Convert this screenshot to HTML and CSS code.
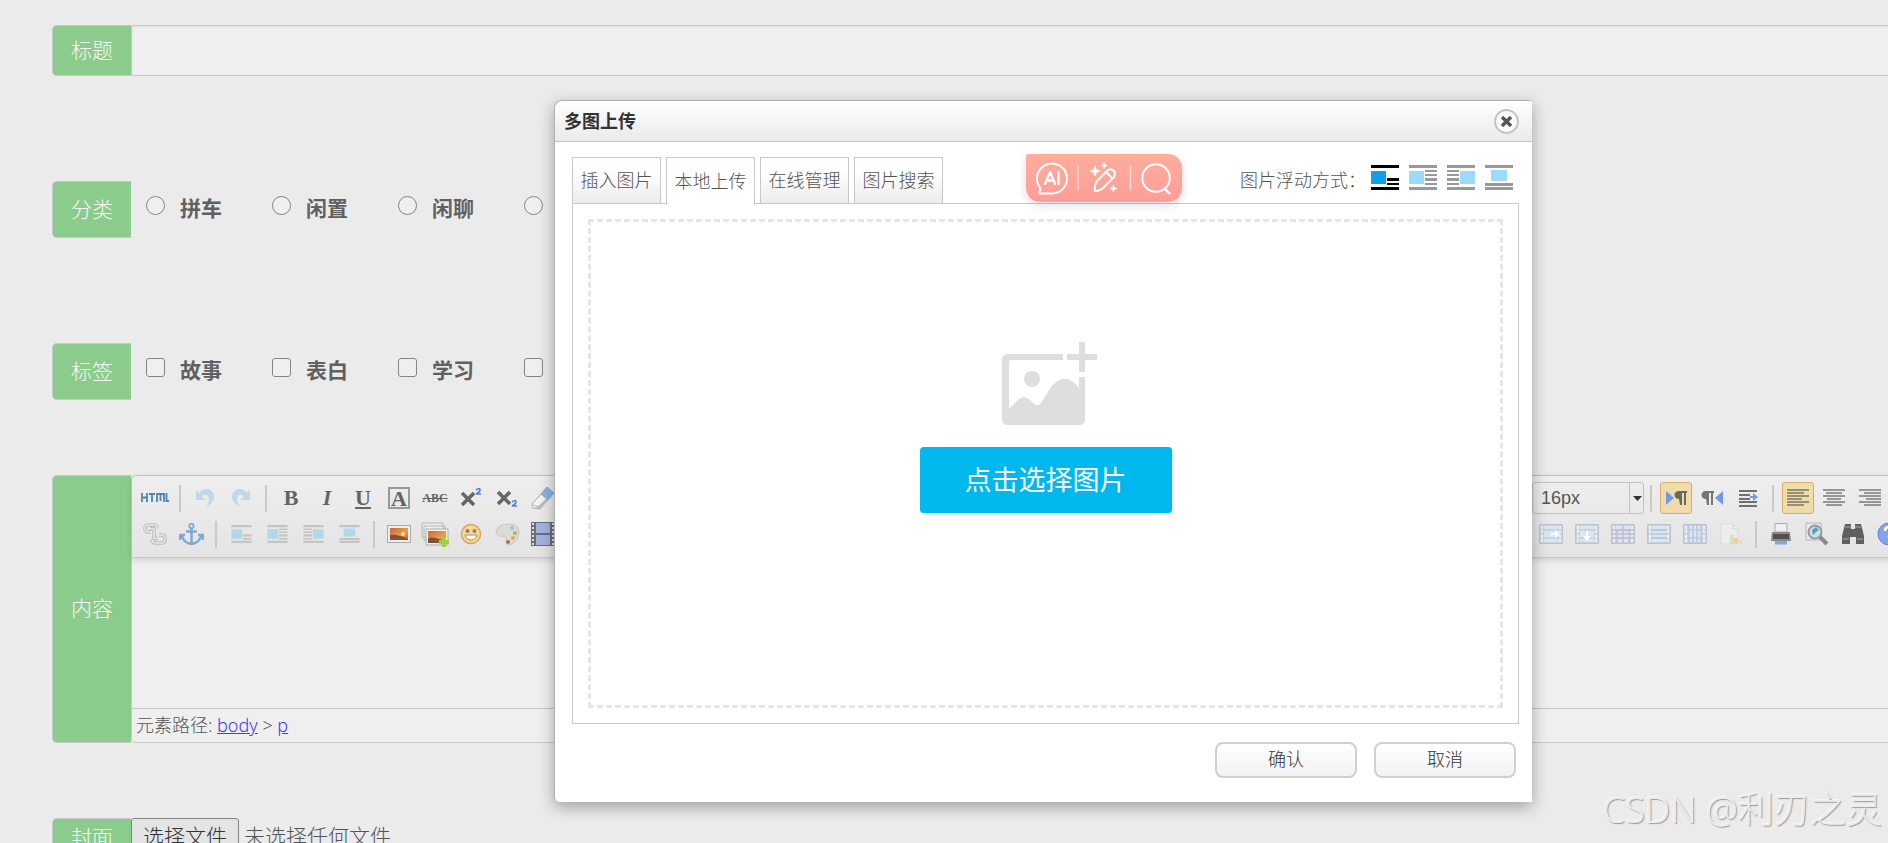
FILE: index.html
```html
<!DOCTYPE html>
<html lang="zh-CN">
<head>
<meta charset="utf-8">
<title>多图上传</title>
<link rel="stylesheet" href="styles.css">
</head>
<body>
<svg class="defs" aria-hidden="true">
  <defs>
    <linearGradient id="sky" x1="0" y1="0" x2="1" y2="1"><stop offset="0" stop-color="#c9673a"/><stop offset=".6" stop-color="#e8a04c"/><stop offset="1" stop-color="#b8643c"/></linearGradient>
    <symbol id="f-none" viewBox="0 0 28 25"><path class="ln" d="M0 0h28v3H0zM16 13h12v3H16zM16 18h12v2H16zM0 22h28v3H0z"/><path class="im" d="M0 6h15v13H0z"/></symbol>
    <symbol id="f-left" viewBox="0 0 28 25"><path class="ln" d="M0 0h28v3H0zM16 5h12v2H16zM16 9h12v2H16zM16 13h12v3H16zM16 18h12v2H16zM0 22h28v3H0z"/><path class="im" d="M0 6h15v13H0z"/></symbol>
    <symbol id="f-right" viewBox="0 0 28 25"><path class="ln" d="M0 0h28v3H0zM0 5h12v2H0zM0 9h12v2H0zM0 13h12v3H0zM0 18h12v2H0zM0 22h28v3H0z"/><path class="im" d="M13 6h15v13H13z"/></symbol>
    <symbol id="f-center" viewBox="0 0 28 25"><path class="ln" d="M0 0h28v3H0zM0 18h28v3H0zM0 22h28v3H0z"/><path class="im" d="M6 5h16v11H6z"/></symbol>
    <symbol id="undo" viewBox="0 0 20 20"><path d="M1 2v10h10L7 9c3-4 7-2 7 2 0 3-1 5-3 8 5-3 8-6 8-10C19 1 9-2 4 5z" fill="#c3d7e8"/></symbol>
    <symbol id="film" viewBox="0 0 24 20"><path d="M.5.500h23v19H.5z" fill="#c8d3de" stroke="#b8c4d2"/><path d="M5 2h14v3H5zM5 7h14v6H5zM5 15h14v3H5z" fill="#dce6f0"/><path d="M2 2h2v3H2zM2 6h2v3H2zM2 11h2v3H2zM2 15h2v3H2zM20 2h2v3h-2zM20 6h2v3h-2zM20 11h2v3h-2zM20 15h2v3h-2z" fill="#edf1f5"/></symbol>
  </defs>
</svg>

<main class="form">
  <div class="group">
    <label class="tag" for="title">标题</label>
    <input class="title-input" id="title" type="text">
  </div>

  <div class="group choices" role="radiogroup" aria-labelledby="cat">
    <span class="tag" id="cat">分类</span>
    <label class="choice"><input type="radio" name="cat"><b>拼车</b></label>
    <label class="choice"><input type="radio" name="cat"><b>闲置</b></label>
    <label class="choice"><input type="radio" name="cat"><b>闲聊</b></label>
    <label class="choice"><input type="radio" name="cat" aria-label="其他"></label>
  </div>

  <div class="group choices" role="group" aria-labelledby="tags">
    <span class="tag" id="tags">标签</span>
    <label class="choice"><input type="checkbox"><b>故事</b></label>
    <label class="choice"><input type="checkbox"><b>表白</b></label>
    <label class="choice"><input type="checkbox"><b>学习</b></label>
    <label class="choice"><input type="checkbox" aria-label="其他"></label>
  </div>

  <div class="group content">
    <span class="tag">内容</span>
    <section class="editor">
      <div class="toolbar">
        <div class="row first">
          <button class="tool"><svg width="28" height="12" viewBox="0 0 28 12"><path d="M1 1v9M6 1v9M1 5.500h5M8 2h6M11 2v8M16 10V2h7v8M19.500 2v7M25.500 1v8h3" fill="none" stroke="#5584b3" stroke-width="1.800"/></svg></button>
          <i class="sep"></i>
          <button class="tool"><svg width="20" height="20"><use href="#undo"/></svg></button>
          <button class="tool flip"><svg width="20" height="20"><use href="#undo"/></svg></button>
          <i class="sep"></i>
          <button class="tool glyph strong">B</button>
          <button class="tool glyph slant">I</button>
          <button class="tool glyph under">U</button>
          <button class="tool glyph"><span class="boxed">A</span></button>
          <button class="tool glyph small-caps">ABC</button>
          <button class="tool"><svg width="22" height="22" viewBox="0 0 22 22"><path d="M2 6l12 12M14 6L2 18" stroke="#666" stroke-width="3.600"/><path d="M16 3q4-3 4 0 0 2-4 4h5" fill="none" stroke="#5b7de0" stroke-width="1.600"/></svg></button>
          <button class="tool"><svg width="22" height="22" viewBox="0 0 22 22"><path d="M2 5l12 12M14 5L2 17" stroke="#666" stroke-width="3.600"/><path d="M16 15q4-3 4 0 0 2-4 4h5" fill="none" stroke="#5b7de0" stroke-width="1.600"/></svg></button>
          <button class="tool"><svg width="24" height="24" viewBox="0 0 24 24"><path d="M16 1l7 6-6 7-7-6z" fill="#86b3ea" stroke="#8ba5c8"/><path d="M10 8l7 6-8 9-7-1-1-4z" fill="#f3f3f3" stroke="#a5a5aa"/><path d="M1 18l7 5 9-9-2-1-8 7z" fill="#b9bbc0"/></svg></button>
          <div class="right-tools">
            <div class="size-box"><select aria-label="字号"><option>16px</option></select><svg width="9" height="5" viewBox="0 0 9 5"><path d="M0 0h9L4.500 5z" fill="#333"/></svg></div>
            <i class="sep"></i>
            <button class="tool"><span class="on"><svg width="22" height="18" viewBox="0 0 22 18"><path d="M1 2l8 7-8 7z" fill="#6f9aea"/><path d="M14 10C8 10 8 2 14 2h8v2h-1v12h-2V4h-2v12h-2z" fill="#6d695e"/></svg></span></button>
            <button class="tool"><svg width="22" height="18" viewBox="0 0 22 18"><path d="M22 2l-8 7 8 7z" fill="#6f9aea"/><path d="M5 10C-1 10-1 2 5 2h8v2h-1v12h-2V4H8v12H6z" fill="#757575"/></svg></button>
            <button class="tool"><svg width="20" height="18" viewBox="0 0 20 18"><path d="M1 2h18M1 6h11M1 10h11M1 13h18M1 17h18" stroke="#707070" stroke-width="2"/><path d="M12 7h3V4l5 4-5 4V9h-3z" fill="#6f9aea"/></svg></button>
            <i class="sep"></i>
            <button class="tool"><span class="on"><svg width="22" height="18" viewBox="0 0 22 18"><path d="M0 1h22M0 4h17M0 7h22M0 10h15M0 13h22M0 16h17" stroke="#7b7668" stroke-width="1.500"/></svg></span></button>
            <button class="tool"><svg width="22" height="18" viewBox="0 0 22 18"><path d="M0 1h22M3 4h16M0 7h22M4 10h14M0 13h22M3 16h16" stroke="#7b7b7b" stroke-width="1.500"/></svg></button>
            <button class="tool"><svg width="22" height="18" viewBox="0 0 22 18"><path d="M0 1h22M5 4h17M0 7h22M7 10h15M0 13h22M5 16h17" stroke="#7b7b7b" stroke-width="1.500"/></svg></button>
          </div>
        </div>
        <div class="row">
          <button class="tool"><svg width="24" height="22" viewBox="0 0 24 22"><path d="M8 9H5q-3 0-3-3.500T5 2h6q3 0 3 3.500M7 5.500h4v10h4M16 12h3q3 0 3 4t-3 4h-6q-4 0-4-4" fill="none" stroke="#bdbdbd" stroke-width="3.600"/><path d="M8 9H5q-3 0-3-3.500T5 2h6q3 0 3 3.500M7 5.500h4v10h4M16 12h3q3 0 3 4t-3 4h-6q-4 0-4-4" fill="none" stroke="#e6e6e6" stroke-width="1.600"/></svg></button>
          <button class="tool"><svg width="25" height="23" viewBox="0 0 25 23"><circle cx="12.500" cy="3" r="2.200" fill="none" stroke="#7ea9d3" stroke-width="1.800"/><path d="M12.500 5v16M7 8.500h11M1 11v6M1 12h5M24 11v6M24 12h-5M3 13q2 7 9.500 8 7.500-1 9.500-8" fill="none" stroke="#7ea9d3" stroke-width="2.500"/></svg></button>
          <i class="sep"></i>
          <button class="tool dim"><svg width="21" height="18"><use href="#f-none"/></svg></button>
          <button class="tool dim"><svg width="21" height="18"><use href="#f-left"/></svg></button>
          <button class="tool dim"><svg width="21" height="18"><use href="#f-right"/></svg></button>
          <button class="tool dim"><svg width="21" height="18"><use href="#f-center"/></svg></button>
          <i class="sep"></i>
          <button class="tool"><svg width="24" height="18" viewBox="0 0 24 18"><path d="M.5.500h23v17H.5z" fill="#eee" stroke="#aaa"/><path d="M3 3h18v12H3z" fill="url(#sky)"/><path d="M3 10q7-1 18 4v1H3z" fill="#84503a"/><circle cx="16" cy="9" r="2" fill="#ffe08a"/></svg></button>
          <button class="tool"><svg width="28" height="25" viewBox="0 0 28 25"><path d="M1 1h21v14H1zM3 4h21v14H3z" fill="#eee" stroke="#b5b5b5"/><path d="M5 7h22v16H5z" fill="#f2f2f2" stroke="#aaa"/><path d="M7 9h18v12H7z" fill="url(#sky)"/><path d="M7 16q6-2 16 3v2H7z" fill="#84503a"/><path d="M21 15h4v3h3v4h-3v3h-4v-3h-3v-4h3z" fill="#9bd344"/></svg></button>
          <button class="tool"><svg width="22" height="22" viewBox="0 0 22 22"><circle cx="11" cy="11" r="9.500" fill="#f6d996" stroke="#d9a562" stroke-width="1.500"/><circle cx="7.500" cy="8" r="2" fill="#9d7e5b"/><circle cx="14.500" cy="8" r="2" fill="#9d7e5b"/><path d="M5 12h12q-1 5-6 5t-6-5z" fill="#fff" stroke="#b08a5a"/></svg></button>
          <button class="tool"><svg width="25" height="23" viewBox="0 0 25 23"><path d="M1 8Q4 1 14 1q10 0 10 8-1 10-9 13-5 0-4-5 1-3-2-4-7 2-8-5z" fill="#dedbd2" stroke="#c8c5bd"/><circle cx="17" cy="5" r="2" fill="#8ec8ea"/><circle cx="20" cy="10" r="2" fill="#8fc66b"/><circle cx="18" cy="15" r="2" fill="#e8a35b"/><circle cx="13" cy="19" r="2" fill="#c0695b"/></svg></button>
          <button class="tool"><svg width="24" height="24" viewBox="0 0 24 24"><path d="M0 0h24v24H0z" fill="#6a6e79"/><path d="M5 1h14v10H5zM5 13h14v10H5z" fill="#a3b3e0"/><path d="M2 1v22M22 1v22" stroke="#ddd" stroke-width="2" stroke-dasharray="2 2"/></svg></button>
          <div class="right-tools">
            <button class="tool"><svg width="24" height="20" viewBox="0 0 24 20"><use href="#film"/><path d="M12 9h4V6l5 4-5 4v-3h-4z" fill="#fff"/></svg></button>
            <button class="tool"><svg width="24" height="20" viewBox="0 0 24 20"><use href="#film"/><path d="M11 7h2v5h3l-4 5-4-5h3z" fill="#fff"/></svg></button>
            <button class="tool"><svg width="24" height="20" viewBox="0 0 24 20"><use href="#film"/><path d="M1 6h22M1 10h22M1 14h22M6 5v14M12 1v18M18 5v14" stroke="#c1bfd2" stroke-width="1.500"/></svg></button>
            <button class="tool"><svg width="24" height="20" viewBox="0 0 24 20"><use href="#film"/><path d="M5 6h14M5 10h14M5 14h14" stroke="#b5c8da" stroke-width="1.500"/></svg></button>
            <button class="tool"><svg width="24" height="20" viewBox="0 0 24 20"><use href="#film"/><path d="M6 1v18M10 1v18M14 1v18M18 1v18" stroke="#b5c8da" stroke-width="1.500"/></svg></button>
            <button class="tool"><svg width="22" height="22" viewBox="0 0 22 22"><path d="M1 1h12l5 5v15H1z" fill="#ededeb" stroke="#dcdcd9"/><path d="M13 1v5h5" fill="none" stroke="#d5d5d3"/><path d="M10 12h4v9h-4z" fill="#d7e3b8"/><path d="M14 15h4v6h-4z" fill="#efc9b4"/><path d="M18 17h4v4h-4z" fill="#ecdfa8"/></svg></button>
            <i class="sep"></i>
            <button class="tool"><svg width="22" height="22" viewBox="0 0 22 22"><path d="M5 .500h12V9H5z" fill="#f0f0f0" stroke="#aaa"/><path d="M2 9h18l1 9H1z" fill="#8a8a8a"/><path d="M3 11h16v5H3z" fill="#505050"/><path d="M5 18h12v3.500H5z" fill="#7da9e2"/></svg></button>
            <button class="tool"><svg width="24" height="24" viewBox="0 0 24 24"><path d="M1 1h15v17H1z" fill="#e6ebef" stroke="#b0b6bc"/><circle cx="10" cy="10" r="6.500" fill="#c9e0ea" stroke="#999" stroke-width="2"/><path d="M8 13l-1-5 4-3 3 3-3 2z" fill="#5b9fb0"/><path d="M15 15l7 7" stroke="#8a8a8a" stroke-width="4"/></svg></button>
            <button class="tool"><svg width="22" height="22" viewBox="0 0 22 22"><path d="M3 1h6v5h4V1h6l3 12v8h-8v-7H8v7H0v-8z" fill="#606060"/><path d="M3 4h6M13 4h6M1 16h6M15 16h6" stroke="#8e8e8e" stroke-width="1.500"/></svg></button>
            <button class="tool"><svg width="24" height="24" viewBox="0 0 24 24"><circle cx="12" cy="12" r="11" fill="#86a4ee" stroke="#5f7fd8"/><path d="M8 9q0-4 4-4t4 4q0 2-4 5v2" fill="none" stroke="#fff" stroke-width="2.500"/></svg></button>
          </div>
        </div>
      </div>
      <div class="edit-area" contenteditable="true" aria-label="内容"></div>
      <div class="path">元素路径: <a href="#body">body</a> &gt; <a href="#p">p</a></div>
    </section>
  </div>

  <div class="group cover">
    <span class="tag">封面</span>
    <button class="file-button">选择文件</button>
    <span class="file-name">未选择任何文件</span>
  </div>
</main>

<section class="dialog" role="dialog" aria-labelledby="dialog-title">
  <header class="dialog-head">
    <h1 id="dialog-title">多图上传</h1>
    <button class="close" aria-label="关闭"><svg width="11" height="11" viewBox="0 0 11 11"><path d="M1 1l9 9M10 1l-9 9" stroke="#555" stroke-width="3.400"/></svg></button>
  </header>
  <div class="dialog-body">
    <div class="tab-row">
      <nav class="tabs">
        <button class="tab">插入图片</button>
        <button class="tab current">本地上传</button>
        <button class="tab">在线管理</button>
        <button class="tab">图片搜索</button>
      </nav>
      <div class="float-modes">
        <span>图片浮动方式：</span>
        <button class="mode chosen" aria-label="无"><svg width="28" height="25"><use href="#f-none"/></svg></button>
        <button class="mode" aria-label="左"><svg width="28" height="25"><use href="#f-left"/></svg></button>
        <button class="mode" aria-label="右"><svg width="28" height="25"><use href="#f-right"/></svg></button>
        <button class="mode" aria-label="居中"><svg width="28" height="25"><use href="#f-center"/></svg></button>
      </div>
    </div>
    <div class="panel">
      <div class="drop">
        <svg class="picture" width="95" height="83" viewBox="0 0 95 83" fill="#dedede"><path d="M61 12H6q-6 0-6 6v59q0 6 6 6h71q6 0 6-6V35h-6v11q-14-18-28-1L39 61q-4 5-9-1-8-9-15-1l-8 8V20q0-2 2-2h52z"/><circle cx="30" cy="37" r="8"/><path d="M77 0h6v12h12v6H83v12h-6V18H65v-6h12z"/></svg>
        <button class="pick">点击选择图片</button>
      </div>
    </div>
    <footer class="actions">
      <button class="action">确认</button>
      <button class="action">取消</button>
    </footer>
  </div>
  <div class="assistant">
    <svg width="156" height="48" viewBox="0 0 156 48" fill="none" stroke="#fff" stroke-width="2" stroke-linecap="round" stroke-linejoin="round">
      <path d="M14 39.500h12a15 15 0 1 0-12-6q1 2-.500 4-.500 2 .500 2z"/>
      <path d="M19 30l5-12 5 12M21 26.500h6M32.500 18v12" stroke-width="2.300"/>
      <path d="M52 12v24M104.500 12v24" stroke-width="1.500" opacity=".6"/>
      <path d="M69 37q-1-7 3-11l10-10q3-2 6 1 2 3 0 6L78 33q-4 4-9 4zM80 18l6 6"/>
      <path d="M69 12q.500 4.500 5 5-4.500.500-5 5-.500-4.500-5-5 4.500-.500 5-5zM78 8.500q.300 2.700 3 3-2.700.300-3 3-.300-2.700-3-3 2.700-.300 3-3zM87.500 31q.300 3.200 3.500 3.500-3.200.300-3.500 3.500-.300-3.200-3.500-3.500 3.200-.300 3.500-3.500z" fill="#fff" stroke-width=".7"/>
      <circle cx="130" cy="24" r="13.800"/><path d="M138.500 34.500l5 5" stroke-width="2.400"/>
    </svg>
  </div>
</section>

<div class="watermark">CSDN @利刃之灵</div>
</body>
</html>
```
FILE: styles.css
```css
* { box-sizing: border-box; }

html, body { height: 100%; }

body {
  margin: 0;
  position: relative;
  overflow: hidden;
  background: #ebebeb;
  color: #555;
  font: 300 18px/24px "Noto Sans", "Noto Sans CJK SC", sans-serif;
}

button, input, select { font: inherit; color: inherit; margin: 0; }
button { padding: 0; border: 0; background: none; cursor: pointer; }
svg { display: block; flex: none; }
.defs { position: absolute; width: 0; height: 0; }

/* form */
.form { padding: 25px 0 0 52px; }
.group { display: flex; margin: 0 -20px 105px 0; }
.tag {
  flex: none;
  display: flex;
  align-items: center;
  justify-content: center;
  width: 79px;
  padding-bottom: 2px;
  border: 1px solid #c8c8c8;
  border-right: 0;
  border-radius: 5px 0 0 5px;
  background: #8bcb8b;
  color: #f8f8f8;
  font-size: 21px;
}
.title-input {
  flex: 1;
  height: 51px;
  border: 1px solid #c8c8c8;
  background: #efefef;
  box-shadow: inset 0 1px 2px rgba(0, 0, 0, .08);
  outline: 0;
}
.choices { height: 57px; }
.choice { display: flex; width: 126px; padding: 15px 0 0 15px; color: #606060; font-size: 21px; line-height: 25px; }
.choice b { font-weight: 700; }
.choice input {
  appearance: none;
  flex: none;
  width: 19px;
  height: 19px;
  margin: 0 15px 0 0;
  border: 1px solid #858585;
  border-radius: 3px;
  background: #efefef;
}
.choice input[type="radio"] { border-radius: 50%; }
.choices:nth-of-type(3), .content { margin-bottom: 75px; }

/* editor */
.editor { flex: 1; min-width: 0; border: 1px solid #c8c8c8; border-radius: 5px; background: #efefef; }
.toolbar {
  padding: 4px 0 5px 5px;
  border-bottom: 1px solid #c8c8c8;
  border-radius: 5px 5px 0 0;
  background: linear-gradient(#eee, #e4e4e4);
  box-shadow: 0 2px 6px rgba(0, 0, 0, .14);
}
.row { display: flex; height: 36px; align-items: center; }
.right-tools { display: flex; align-items: center; margin-left: auto; }
.first .right-tools { margin-right: 19px; }
.tool { flex: none; display: flex; align-items: center; justify-content: center; width: 36px; height: 36px; }
.flip { transform: scaleX(-1); }
.sep { flex: none; width: 2px; height: 27px; margin: 0 6px; background: #c9c9c9; }
.glyph { color: #636363; font: 700 22px/24px "Liberation Serif", serif; }
.slant { font-style: italic; }
.under { text-decoration: underline; }
.boxed { width: 22px; height: 22px; border: 2px solid #999; line-height: 19px; }
.small-caps { font-size: 12px; text-decoration: line-through; }
.dim { --ln: #c4c4c4; --im: #b1d8e8; }
.on {
  display: flex;
  align-items: center;
  justify-content: center;
  width: 32px;
  height: 32px;
  border: 1px solid #dcac6c;
  border-radius: 3px;
  background: #f0dca8;
}
.size-box { position: relative; width: 112px; height: 32px; border: 1px solid #c2c2c2; border-radius: 3px; background: linear-gradient(90deg, transparent 96px, #c2c2c2 96px, #c2c2c2 97px, transparent 97px); }
.size-box select { appearance: none; width: 100%; height: 30px; padding: 0 24px 0 8px; border: 0; background: none; font: 18px/24px "Liberation Sans", sans-serif; }
.size-box svg { position: absolute; right: 1px; top: 13px; }
.edit-area { height: 150px; outline: 0; }
.path { height: 34px; padding: 4px; border-top: 1px solid #c8c8c8; }
.path a { color: #3c3cf0; }

.file-button { height: 38px; padding: 0 11px 2px; border: 1px solid #858585; border-radius: 3px; background: #e4e4e4; color: #333; font-size: 21px; }
.file-name { padding: 4px 5px; font-size: 21px; line-height: 28px; }
.cover .tag { height: 40px; }

/* dialog */
.dialog {
  position: absolute;
  top: 100px;
  left: 554px;
  right: 356px;
  border: 1px solid #b0b0b0;
  border-width: 1px 0 0 1px;
  border-radius: 8px 3px 0 5px;
  background: #fff;
  box-shadow: 0 5px 16px rgba(0, 0, 0, .32);
}
.dialog-head {
  display: flex;
  align-items: center;
  justify-content: space-between;
  height: 41px;
  padding: 0 13px 0 9px;
  border-bottom: 1px solid #c4c4c4;
  border-radius: 8px 3px 0 0;
  background: linear-gradient(#fff, #eaeaea);
}
.dialog-head h1 { margin: 0; color: #333; font-size: 18px; font-weight: 700; }
.close { display: grid; place-items: center; width: 25px; height: 25px; border: 2px solid #c4c4c4; border-radius: 50%; background: #fafafa; }
.dialog-body { padding: 15px 13px 24px 17px; }
.tab-row { display: flex; justify-content: space-between; }
.tabs { display: flex; gap: 5px; margin-bottom: -1px; }
.tab {
  width: 89px;
  height: 47px;
  padding: 0 8px 2px;
  border: 1px solid #c8c8c8;
  background: linear-gradient(#fff 30%, #ececec);
  white-space: nowrap;
  display: flex;
  align-items: center;
  justify-content: center;
}
.tab.current { position: relative; height: 48px; margin-bottom: -1px; border-bottom: 0; background: #fff; }
.float-modes { display: flex; align-items: flex-start; gap: 10px; height: 46px; padding: 8px 6px 0 0; }
.float-modes span { margin: 3px -5px 0 0; }
.mode { --ln: #999; --im: #9ddafa; }
.mode.chosen { --ln: #000; --im: #109fe8; }
.ln { fill: var(--ln); }
.im { fill: var(--im); }
.panel { padding: 15px; border: 1px solid #c8c8c8; }
.drop { display: flex; flex-direction: column; align-items: center; height: 489px; padding-top: 120px; border: 3px dashed #e6e6e6; }
.picture { margin-left: 8px; }
.pick { height: 66px; margin-top: 22px; padding: 0 45px; border-radius: 4px; background: #00b7ee; box-shadow: 0 1px 2px rgba(0, 0, 0, .15); color: #fff; font-size: 27px; font-weight: 400; }
.actions { display: flex; justify-content: flex-end; gap: 17px; padding: 18px 3px 0 0; }
.action { width: 142px; height: 36px; padding-bottom: 2px; border: 2px solid #d0d0d0; border-radius: 8px; background: linear-gradient(#fff, #f2f2f2); color: #333; }

/* floating assistant bar */
.assistant {
  position: absolute;
  top: 53px;
  right: 350px;
  border-radius: 3px 14px 14px 14px;
  background: linear-gradient(#ffad9d, #ff9d98);
  box-shadow: 0 3px 10px rgba(0, 0, 0, .14);
}

.watermark {
  position: absolute;
  right: 6px;
  bottom: 9px;
  color: #ececec;
  font-size: 36px;
  line-height: 48px;
  text-shadow: 1px 1px 1px #9c9c9c, -1px -1px 0 #f6f6f6;
}
```
